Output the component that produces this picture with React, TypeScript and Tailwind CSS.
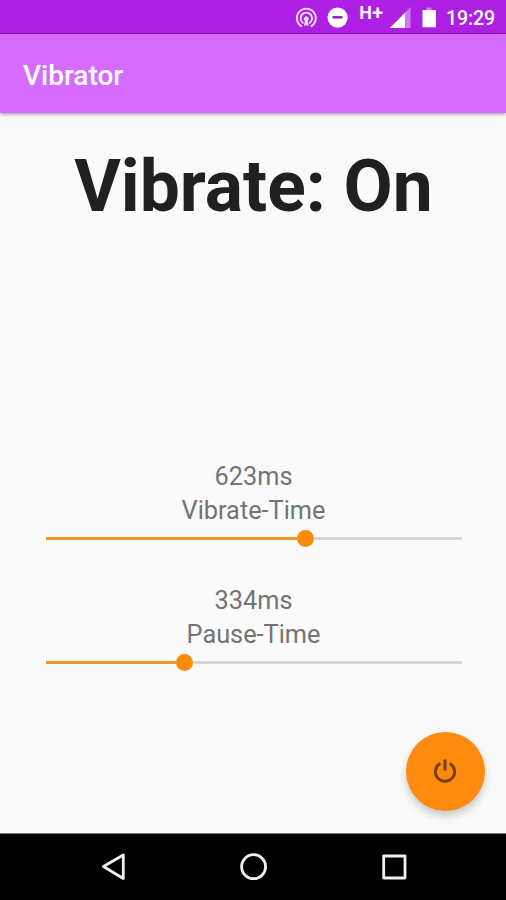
import React from "react";

function StatusBar() {
  return (
    <header className="h-[34px] shrink-0 border-b border-[#9a14c6] bg-[#ae1fe4]">
      <svg className="block h-[33px] w-full" viewBox="0 0 506 33" fill="none">
        <g stroke="#f6dcff" strokeWidth="1.9" strokeLinecap="round">
          <path d="M301.2 26.1a9.5 9.5 0 1 1 10.2 0" />
          <path d="M302.8 22.8a5.7 5.7 0 1 1 7 0" />
        </g>
        <path d="M303.9 25.6l1-4.8a2.4 2.4 0 1 1 2.8 0l1 4.8z" fill="#f6dcff" />
        <circle cx="337.6" cy="17.6" r="10.1" fill="white" />
        <path d="M332.5 17.3h10" stroke="#8d18b9" strokeWidth="2.4" />
        <g fill="#faeaff" fontFamily="Roboto, sans-serif" fontWeight="700">
          <text x="359.3" y="19.2" fontSize="18">H</text>
          <text x="372.3" y="20" fontSize="20">+</text>
        </g>
        <path d="M410.5 7v21H390z" fill="#ce79ed" />
        <path d="M405 12.8V28H390z" fill="white" />
        <path d="M426.5 7.5h5v2.8h-5z" fill="#ce79ed" />
        <path d="M422.5 10h13.5v17.3h-13.5z" fill="white" />
        <text x="446" y="25.2" fill="#fff" fontFamily="Roboto, sans-serif" fontSize="19.5" fontWeight="500" textLength="49">19:29</text>
      </svg>
    </header>
  );
}

function TimeSlider({ value, label, position }: { value: number; label: string; position: number }) {
  return (
    <section className="flex flex-col items-center text-[25.3px] leading-[34.5px] text-[#747474]">
      <p>{value}ms</p>
      <p>{label}</p>
      <div className="mt-[1px] flex h-[18px] w-[416px] items-center">
        <div className="h-[3px] bg-[#ef9526]" style={{ width: position - 8 }} />
        <div className="size-[17px] shrink-0 rounded-full bg-[#fb8c0a]" />
        <div className="h-[3px] flex-1 bg-[#d5d5d5]" />
      </div>
    </section>
  );
}

export default function App() {
  return (
    <div className="flex h-[900px] w-[506px] flex-col overflow-hidden bg-[#fafafa] font-['Roboto',sans-serif]">
      <StatusBar />
      <div className="flex h-[79px] shrink-0 items-center bg-[#d56cff] pt-1 pl-[23px] shadow-[0_1px_4px_rgba(0,0,0,0.4)]">
        <h1 className="text-[28px] leading-8 font-medium text-white">Vibrator</h1>
      </div>
      <main className="flex flex-1 flex-col">
        <h2 className="mt-8 pl-px text-center text-[71.4px] leading-[84px] font-bold whitespace-nowrap text-[#202020]">Vibrate: On</h2>
        <div className="mt-[230.5px] flex flex-col gap-9 pl-px">
          <TimeSlider value={623} label="Vibrate-Time" position={259} />
          <TimeSlider value={334} label="Pause-Time" position={138.5} />
        </div>
        <button aria-label="Toggle vibration" className="mt-[60px] mr-[21.5px] flex size-[79px] items-center justify-center self-end rounded-full bg-[#fe8b0d] shadow-[0_5px_8px_rgba(0,0,0,0.2)]">
          <svg className="size-[26px]" viewBox="0 0 26 26" fill="none" stroke="#793f06" strokeWidth="3">
            <path d="M8.3 5.4a9.6 9.6 0 1 0 9.4 0M13 1.6v11" />
          </svg>
        </button>
      </main>
      <nav className="h-[67px] shrink-0 border-t border-[#777] bg-black">
        <svg className="block h-[66px] w-full" viewBox="0 0 506 66" fill="none" stroke="#f0f0f0" strokeWidth="2.8" strokeLinejoin="round">
          <path d="M103.4 32.5 123.3 21v23.5z" />
          <circle cx="253.6" cy="32.7" r="12" />
          <rect x="383.7" y="22" width="21.3" height="22" />
        </svg>
      </nav>
    </div>
  );
}
